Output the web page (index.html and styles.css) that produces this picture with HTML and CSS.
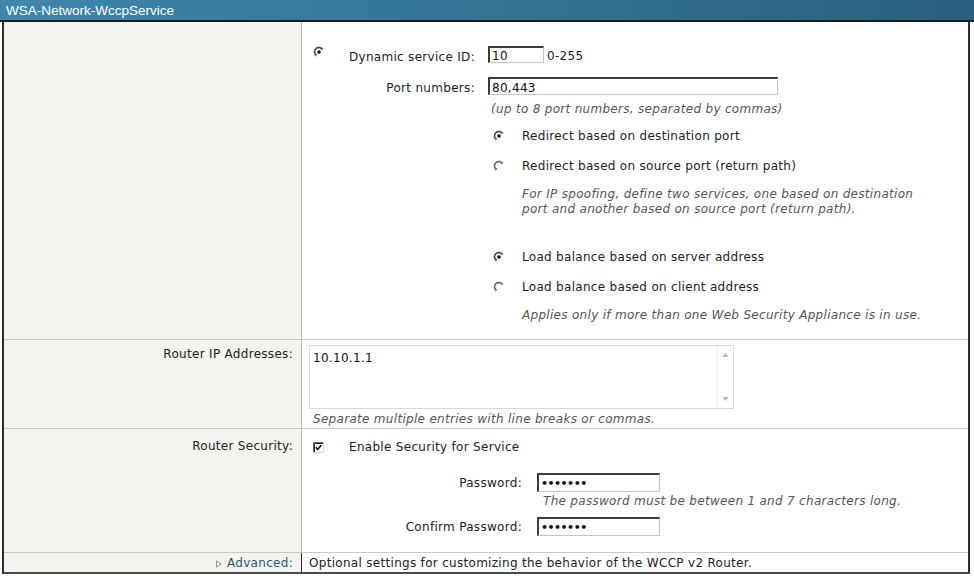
FILE: index.html
```html
<!DOCTYPE html>
<html>
<head>
<meta charset="utf-8">
<title>WSA-Network-WccpService</title>
<link rel="stylesheet" href="styles.css">
</head>
<body>
<div class="header">WSA-Network-WccpService</div>
<div class="panel">
  <div class="row">
    <div class="label"></div>
    <div class="value svc">
      <div class="svc-grid">
        <span class="radio-cell">
          <svg class="radio" viewBox="0 0 12 12"><path d="M10.2 3.2 A5 5 0 1 0 3.2 10.2" fill="none" stroke="#8c8c8c" stroke-width="1.4"/><path d="M9.1 3.9 A3.9 3.9 0 1 0 3.9 9.1" fill="none" stroke="#333" stroke-width="1.1"/><circle cx="6" cy="6" r="1.8" fill="#111"/></svg>
        </span>
        <span class="svc-label">Dynamic service ID:</span>
        <div class="field-line"><span class="input w-id">10</span><span class="range">0-255</span></div>
        <span></span>
        <span class="svc-label">Port numbers:</span>
        <div class="field-line"><span class="input w-ports">80,443</span></div>
      </div>
      <div class="sub">
        <div class="hint hint-ports">(up to 8 port numbers, separated by commas)</div>
        <div class="opt opt-first">
          <svg class="radio" viewBox="0 0 12 12"><path d="M10.2 3.2 A5 5 0 1 0 3.2 10.2" fill="none" stroke="#8c8c8c" stroke-width="1.4"/><path d="M9.1 3.9 A3.9 3.9 0 1 0 3.9 9.1" fill="none" stroke="#333" stroke-width="1.1"/><circle cx="6" cy="6" r="1.8" fill="#111"/></svg>
          <span>Redirect based on destination port</span>
        </div>
        <div class="opt">
          <svg class="radio" viewBox="0 0 12 12"><path d="M10.2 3.2 A5 5 0 1 0 3.2 10.2" fill="none" stroke="#9a9a9a" stroke-width="1.4"/><path d="M9.1 3.9 A3.9 3.9 0 1 0 3.9 9.1" fill="none" stroke="#555" stroke-width="1.1"/></svg>
          <span>Redirect based on source port (return path)</span>
        </div>
        <div class="note note-two">For IP spoofing, define two services, one based on destination<br>port and another based on source port (return path).</div>
        <div class="opt opt-gap">
          <svg class="radio" viewBox="0 0 12 12"><path d="M10.2 3.2 A5 5 0 1 0 3.2 10.2" fill="none" stroke="#8c8c8c" stroke-width="1.4"/><path d="M9.1 3.9 A3.9 3.9 0 1 0 3.9 9.1" fill="none" stroke="#333" stroke-width="1.1"/><circle cx="6" cy="6" r="1.8" fill="#111"/></svg>
          <span>Load balance based on server address</span>
        </div>
        <div class="opt">
          <svg class="radio" viewBox="0 0 12 12"><path d="M10.2 3.2 A5 5 0 1 0 3.2 10.2" fill="none" stroke="#9a9a9a" stroke-width="1.4"/><path d="M9.1 3.9 A3.9 3.9 0 1 0 3.9 9.1" fill="none" stroke="#555" stroke-width="1.1"/></svg>
          <span>Load balance based on client address</span>
        </div>
        <div class="note note-one">Applies only if more than one Web Security Appliance is in use.</div>
      </div>
    </div>
  </div>

  <div class="row">
    <div class="label label-ip">Router IP Addresses:</div>
    <div class="value ip">
      <div class="textarea">
        <div class="ta-text">10.10.1.1</div>
        <div class="ta-scroll">
          <svg viewBox="0 0 8 5" class="arrow"><path d="M0 5 L4 0 L8 5 Z" fill="#b4b4b4"/></svg>
          <svg viewBox="0 0 8 5" class="arrow"><path d="M0 0 L8 0 L4 5 Z" fill="#b4b4b4"/></svg>
        </div>
      </div>
      <div class="hint hint-ip">Separate multiple entries with line breaks or commas.</div>
    </div>
  </div>

  <div class="row">
    <div class="label label-sec">Router Security:</div>
    <div class="value sec">
      <div class="check-line">
        <svg class="check" viewBox="0 0 11 11"><path d="M0.5 10.5 V0.5 H10.5" fill="none" stroke="#6a6a6a" stroke-width="1"/><path d="M1.5 10 V1.5 H10" fill="none" stroke="#2a2a2a" stroke-width="1"/><path d="M10.5 0.5 V10.5 H0.5" fill="none" stroke="#d6d6d6" stroke-width="1"/><path d="M2.8 5.2 L4.6 7.4 L8.4 3" fill="none" stroke="#111" stroke-width="1.6"/></svg>
        <span>Enable Security for Service</span>
      </div>
      <div class="pw-grid">
        <span class="pw-label">Password:</span>
        <span class="input w-pw">•••••••</span>
        <span></span>
        <span class="hint hint-pw">The password must be between 1 and 7 characters long.</span>
        <span class="pw-label">Confirm Password:</span>
        <span class="input w-pw">•••••••</span>
      </div>
    </div>
  </div>

  <div class="row row-last">
    <div class="label label-adv"><span class="tri">
      <svg viewBox="0 0 6 8" class="tri-svg"><path d="M0.5 0.8 L5.2 4 L0.5 7.2 Z" fill="none" stroke="#8a8a8a" stroke-width="0.9"/></svg>
    </span><a class="adv-link" href="#">Advanced:</a></div>
    <div class="value adv">Optional settings for customizing the behavior of the WCCP v2 Router.</div>
  </div>
</div>
</body>
</html>
```

FILE: styles.css
```css
html, body {
  margin: 0;
  padding: 0;
  background: #ffffff;
}

body {
  font-family: "DejaVu Sans", Verdana, sans-serif;
  font-size: 12px;
  letter-spacing: 0.3px;
  color: #222222;
  width: 974px;
  height: 583px;
  overflow: hidden;
}

.header {
  height: 20px;
  line-height: 21px;
  padding-left: 6px;
  background: linear-gradient(to right, #3f87ac, #2b5f7e);
  border-bottom: 2px solid #1b1b1b;
  color: #ffffff;
  font-family: "Liberation Sans", Arial, sans-serif;
  font-size: 13.5px;
  letter-spacing: 0;
}

.panel {
  margin-left: 2px;
  width: 968px;
  box-sizing: border-box;
  border-left: 2px solid #2e2e2e;
  border-right: 2px solid #2e2e2e;
  border-bottom: 2px solid #4a4a4a;
}

.row {
  display: flex;
  border-bottom: 1px solid #c9c9c9;
}

.row-last {
  border-bottom: none;
}

.label {
  width: 298px;
  flex: none;
  box-sizing: border-box;
  background: #f4f3ed;
  border-right: 1px solid #b4b4b4;
  text-align: right;
  padding-right: 8px;
  white-space: nowrap;
}

.row-last .label {
  border-right-color: #333333;
}

.value {
  flex: 1;
  min-width: 0;
}

/* service row */
.svc {
  padding: 24px 0 16px 11px;
}

.svc-grid {
  display: grid;
  grid-template-columns: 18px 131px auto;
  column-gap: 13px;
  row-gap: 14px;
  align-items: start;
}

.radio-cell {
  height: 17px;
}

.radio {
  width: 12px;
  height: 12px;
  display: block;
  flex: none;
}

.svc-label {
  white-space: nowrap;
  height: 17px;
  line-height: 15px;
  padding-top: 4px;
  box-sizing: border-box;
  display: flex;
  justify-content: flex-end;
}

.field-line {
  display: flex;
  align-items: flex-start;
}

.input {
  box-sizing: border-box;
  display: block;
  background: #ffffff;
  border-top: 2px solid #3c3c3c;
  border-left: 2px solid #3c3c3c;
  border-right: 1px solid #c4c4c4;
  border-bottom: 1px solid #c4c4c4;
  padding-left: 2px;
  color: #111111;
  white-space: nowrap;
  overflow: visible;
}

.w-id {
  width: 56px;
  height: 17px;
  line-height: 17px;
}

.range {
  margin-left: 3px;
  height: 17px;
  box-sizing: border-box;
  line-height: 15px;
  padding-top: 3px;
}

.w-ports {
  width: 290px;
  height: 18px;
  line-height: 18px;
}

.sub {
  margin-left: 175px;
}

.hint {
  font-style: italic;
  color: #555555;
  white-space: nowrap;
  line-height: 14px;
}

.hint-ports {
  margin-top: 7px;
  padding-left: 3px;
}

.opt {
  display: flex;
  align-items: center;
  height: 16px;
  margin-top: 14px;
  padding-left: 5px;
  white-space: nowrap;
}

.opt-first {
  margin-top: 12px;
}

.opt-gap {
  margin-top: 32px;
}

.opt .radio {
  margin-right: 17px;
}

.note {
  font-style: italic;
  color: #555555;
  line-height: 15px;
  margin-top: 13px;
  padding-left: 34px;
  white-space: nowrap;
}

/* router IP row */
.label-ip {
  padding-top: 7px;
  line-height: 14px;
}

.ip {
  padding: 5px 0 2px 7px;
}

.textarea {
  width: 425px;
  height: 64px;
  box-sizing: border-box;
  border: 1px solid #d9d9d9;
  display: flex;
  background: #ffffff;
}

.ta-text {
  flex: 1;
  padding: 5px 0 0 3px;
  line-height: 14px;
  color: #111111;
}

.ta-scroll {
  width: 15px;
  border-left: 1px solid #f0f0f0;
  display: flex;
  flex-direction: column;
  justify-content: space-between;
  align-items: center;
  padding: 7px 0 7px 0;
}

.arrow {
  width: 7px;
  height: 4px;
  display: block;
}

.hint-ip {
  margin-top: 3px;
  padding-left: 4px;
}

/* router security row */
.label-sec {
  padding-top: 9px;
  line-height: 16px;
}

.sec {
  padding: 10px 0 16px 11px;
}

.check-line {
  display: flex;
  align-items: center;
  height: 16px;
}

.check {
  width: 11px;
  height: 11px;
  display: block;
  margin-right: 25px;
}

.pw-grid {
  display: grid;
  grid-template-columns: 209px 123px;
  column-gap: 15px;
  align-items: start;
  margin-top: 18px;
}

.pw-label {
  text-align: right;
  white-space: nowrap;
  height: 19px;
  box-sizing: border-box;
  line-height: 17px;
  padding-top: 2px;
}

.w-pw {
  width: 123px;
  height: 19px;
  line-height: 17px;
  font-weight: bold;
  font-size: 11px;
  letter-spacing: -0.5px;
}

.hint-pw {
  padding-left: 6px;
  margin-top: 2px;
  margin-bottom: 9px;
}

/* advanced row */
.label-adv {
  line-height: 17px;
  height: 19px;
  box-sizing: border-box;
  padding-top: 2px;
  display: flex;
  justify-content: flex-end;
  align-items: center;
}

.tri {
  display: flex;
  align-items: center;
  margin-right: 5px;
}

.tri-svg {
  width: 6px;
  height: 8px;
  display: block;
}

.adv-link {
  color: #1d5a79;
  text-decoration: none;
}

.adv {
  line-height: 17px;
  padding-top: 2px;
  padding-left: 7px;
  white-space: nowrap;
}
```
